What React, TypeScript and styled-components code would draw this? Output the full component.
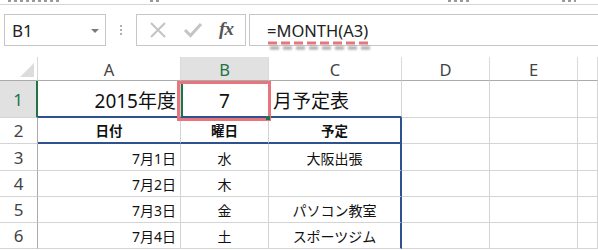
import React from "react";
import styled, { createGlobalStyle } from "styled-components";

const Global = createGlobalStyle`
  html, body { margin: 0; padding: 0; background: #fff; }
  body { font-family: "Noto Sans", "Noto Sans CJK JP", sans-serif; width: 598px; height: 250px; overflow: hidden; }
  * { box-sizing: border-box; }
`;

const GREEN = "#217346";
const BLUE = "#2f528f";
const GRID = "#d4d4d4";
const RED = "#e8747c";

const Page = styled.div`
  width: 598px;
  height: 250px;
  overflow: hidden;
`;

const TopStrip = styled.div`
  height: 5px;
  border-bottom: 1px solid #d6d6d6;
  display: flex;
  align-items: flex-start;
  padding-left: 8px;
`;

const StripMark = styled.span<{ $w: number; $ml: number }>`
  width: ${(p) => p.$w}px;
  margin-left: ${(p) => p.$ml}px;
  height: 2px;
  background: repeating-linear-gradient(90deg, #9a9a9a 0 3px, transparent 3px 6px);
`;

const FormulaRow = styled.div`
  display: flex;
  align-items: stretch;
  height: 32px;
  margin-top: 9px;
  padding-left: 4px;
`;

const NameBox = styled.div`
  width: 102px;
  border: 1px solid #c6c6c6;
  display: flex;
  align-items: center;
  justify-content: space-between;
  padding: 0 6px 0 7px;
  font-size: 17px;
  color: #222;
`;

const DropArrow = styled.span`
  width: 0;
  height: 0;
  border-left: 4px solid transparent;
  border-right: 4px solid transparent;
  border-top: 4px solid #7a7a7a;
  margin-top: 2px;
`;

const Grip = styled.div`
  width: 30px;
  display: flex;
  flex-direction: column;
  align-items: center;
  justify-content: center;
  gap: 2px;
`;

const GripDot = styled.span`
  width: 2px;
  height: 2px;
  background: #b0b0b0;
`;

const ButtonBox = styled.div`
  width: 110px;
  border: 1px solid #c6c6c6;
  display: flex;
  align-items: center;
  justify-content: space-around;
  padding: 0 4px;
`;

const FxText = styled.span`
  font-family: "Liberation Serif", "DejaVu Serif", serif;
  font-style: italic;
  font-weight: bold;
  font-size: 19px;
  color: #555;
  letter-spacing: -1px;
  margin-top: -2px;
`;

const FormulaInput = styled.div`
  flex: 1;
  margin-left: 3px;
  border: 1px solid #c6c6c6;
  border-right: none;
  position: relative;
  display: flex;
  align-items: center;
  padding-left: 17px;
  font-size: 16.5px;
  color: #222;
`;

const DashLine = styled.svg`
  position: absolute;
  left: 18px;
  top: 26px;
  overflow: visible;
  filter: drop-shadow(2px 5px 1.2px rgba(0, 0, 0, 0.35));
`;

const SheetWrap = styled.div`
  position: relative;
  margin-top: 11px;
`;

const Sheet = styled.div`
  display: grid;
  grid-template-columns: 38px 143px 88px 133px 88px 88px 20px;
  grid-template-rows: 24px 37px 26px 27px 26px 26px 26px 26px;
`;

const Corner = styled.div`
  border-right: 1px solid #d8d8d8;
  border-bottom: 1px solid #ababab;
  position: relative;
`;

const CornerTri = styled.svg`
  position: absolute;
  right: 3px;
  bottom: 3px;
`;

const ColHead = styled.div<{ $sel?: boolean }>`
  border-right: 1px solid #dadada;
  border-bottom: 1px solid #ababab;
  background: ${(p) => (p.$sel ? "#e1e1e1" : "#fff")};
  color: ${(p) => (p.$sel ? GREEN : "#444")};
  font-size: 16.5px;
  display: flex;
  align-items: center;
  justify-content: center;
  padding-top: 1px;
`;

const RowHead = styled.div<{ $sel?: boolean }>`
  border-right: ${(p) => (p.$sel ? `2px solid ${GREEN}` : "1px solid #ababab")};
  border-bottom: 1px solid ${GRID};
  background: ${(p) => (p.$sel ? "#e1e1e1" : "#fff")};
  color: ${(p) => (p.$sel ? GREEN : "#444")};
  font-size: 17px;
  display: flex;
  align-items: center;
  justify-content: center;
`;

type Align = "left" | "center" | "right";

const Cell = styled.div<{
  $align?: Align;
  $size?: number;
  $bold?: boolean;
  $blueBottom?: boolean;
  $blueRight?: boolean;
  $sel?: boolean;
}>`
  position: relative;
  border-right: ${(p) => (p.$blueRight ? `2px solid ${BLUE}` : `1px solid ${GRID}`)};
  border-bottom: ${(p) => (p.$blueBottom ? `2px solid ${BLUE}` : `1px solid ${GRID}`)};
  display: flex;
  align-items: flex-end;
  justify-content: ${(p) =>
    p.$align === "right" ? "flex-end" : p.$align === "center" ? "center" : "flex-start"};
  padding: 0 4px 2px 4px;
  font-size: ${(p) => p.$size ?? 14}px;
  font-weight: ${(p) => (p.$bold ? 700 : 400)};
  color: #111;
  white-space: nowrap;
  overflow: visible;
  box-shadow: ${(p) => (p.$sel ? `inset 2px 0 0 ${GREEN}` : "none")};
`;

const FillHandle = styled.span`
  position: absolute;
  right: -2px;
  bottom: -4px;
  width: 4px;
  height: 4px;
  background: ${GREEN};
  z-index: 3;
`;

const RedBox = styled.div`
  position: absolute;
  left: 177px;
  top: 24px;
  width: 94px;
  height: 40px;
  border: 3px solid ${RED};
  z-index: 2;
  pointer-events: none;
`;

interface CellSpec {
  text?: string;
  align?: Align;
  size?: number;
  bold?: boolean;
  blueBottom?: boolean;
  blueRight?: boolean;
  sel?: boolean;
}

const rows: CellSpec[][] = [
  [
    { text: "2015年度", align: "right", size: 19, blueBottom: true },
    { text: "7", align: "center", size: 19, blueBottom: true, sel: true },
    { text: "月予定表", align: "left", size: 19, blueBottom: true },
    {},
    {},
    {},
  ],
  [
    { text: "日付", align: "center", bold: true, size: 13.5, blueBottom: true },
    { text: "曜日", align: "center", bold: true, size: 13.5, blueBottom: true },
    { text: "予定", align: "center", bold: true, size: 13.5, blueBottom: true, blueRight: true },
    {},
    {},
    {},
  ],
  [
    { text: "7月1日", align: "right" },
    { text: "水", align: "center" },
    { text: "大阪出張", align: "center", blueRight: true },
    {},
    {},
    {},
  ],
  [
    { text: "7月2日", align: "right" },
    { text: "木", align: "center" },
    { text: "", align: "center", blueRight: true },
    {},
    {},
    {},
  ],
  [
    { text: "7月3日", align: "right" },
    { text: "金", align: "center" },
    { text: "パソコン教室", align: "center", blueRight: true },
    {},
    {},
    {},
  ],
  [
    { text: "7月4日", align: "right" },
    { text: "土", align: "center" },
    { text: "スポーツジム", align: "center", blueRight: true },
    {},
    {},
    {},
  ],
];

const cols = ["A", "B", "C", "D", "E", ""];

export default function App() {
  return (
    <Page>
      <Global />
      <TopStrip>
        <StripMark $w={52} $ml={0} />
        <StripMark $w={12} $ml={90} />
        <StripMark $w={22} $ml={286} />
        <StripMark $w={14} $ml={92} />
      </TopStrip>
      <FormulaRow>
        <NameBox>
          <span>B1</span>
          <DropArrow />
        </NameBox>
        <Grip>
          <GripDot />
          <GripDot />
          <GripDot />
        </Grip>
        <ButtonBox>
          <svg width="18" height="18" viewBox="0 0 18 18">
            <path d="M2 2 L16 16 M16 2 L2 16" stroke="#c4c4c4" strokeWidth="2" fill="none" />
          </svg>
          <svg width="20" height="18" viewBox="0 0 20 18">
            <path d="M2 9 L7.5 14.5 L18 3" stroke="#c4c4c4" strokeWidth="3" fill="none" />
          </svg>
          <FxText>fx</FxText>
        </ButtonBox>
        <FormulaInput>
          <span>=MONTH(A3)</span>
          <DashLine width="102" height="4">
            <line x1="0" y1="2" x2="102" y2="2" stroke={RED} strokeWidth="3" strokeDasharray="9 4" />
          </DashLine>
        </FormulaInput>
      </FormulaRow>
      <SheetWrap>
        <Sheet>
          <Corner>
            <CornerTri width="14" height="14" viewBox="0 0 14 14">
              <polygon points="14,0 14,14 0,14" fill="#dcdcdc" />
            </CornerTri>
          </Corner>
          {cols.map((c, i) => (
            <ColHead key={"h" + i} $sel={c === "B"}>
              {c}
            </ColHead>
          ))}
          {rows.map((r, ri) => (
            <React.Fragment key={"r" + ri}>
              <RowHead $sel={ri === 0}>{ri + 1}</RowHead>
              {r.map((cell, ci) => (
                <Cell
                  key={ci}
                  $align={cell.align}
                  $size={cell.size}
                  $bold={cell.bold}
                  $blueBottom={cell.blueBottom}
                  $blueRight={cell.blueRight}
                  $sel={cell.sel}
                >
                  {cell.text}
                  {cell.sel && <FillHandle />}
                </Cell>
              ))}
            </React.Fragment>
          ))}
        </Sheet>
        <RedBox />
      </SheetWrap>
    </Page>
  );
}
